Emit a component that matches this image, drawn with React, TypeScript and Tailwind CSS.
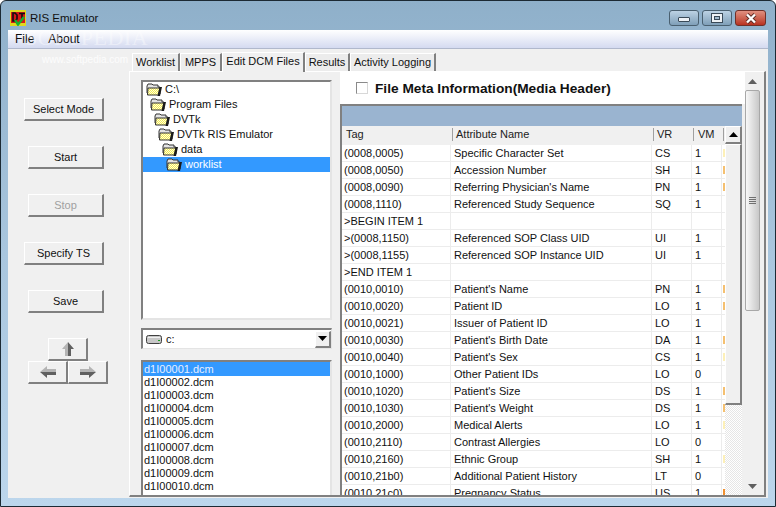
import { ReactNode } from 'react'

const rows: [string, string, string, string, string][] = [
  ['(0008,0005)', 'Specific Character Set', 'CS', '1', 'bg-[#fdf0b8]'],
  ['(0008,0050)', 'Accession Number', 'SH', '1', 'bg-[#f5c070]'],
  ['(0008,0090)', "Referring Physician's Name", 'PN', '1', 'bg-[#f5c070]'],
  ['(0008,1110)', 'Referenced Study Sequence', 'SQ', '1', 'bg-white'],
  ['>BEGIN ITEM 1', '', '', '', 'bg-white'],
  ['>(0008,1150)', 'Referenced SOP Class UID', 'UI', '1', 'bg-white'],
  ['>(0008,1155)', 'Referenced SOP Instance UID', 'UI', '1', 'bg-white'],
  ['>END ITEM 1', '', '', '', 'bg-white'],
  ['(0010,0010)', "Patient's Name", 'PN', '1', 'bg-[#f5c070]'],
  ['(0010,0020)', 'Patient ID', 'LO', '1', 'bg-[#f5c070]'],
  ['(0010,0021)', 'Issuer of Patient ID', 'LO', '1', 'bg-white'],
  ['(0010,0030)', "Patient's Birth Date", 'DA', '1', 'bg-[#f5c070]'],
  ['(0010,0040)', "Patient's Sex", 'CS', '1', 'bg-[#fdf0b8]'],
  ['(0010,1000)', 'Other Patient IDs', 'LO', '0', 'bg-white'],
  ['(0010,1020)', "Patient's Size", 'DS', '1', 'bg-[#f5c070]'],
  ['(0010,1030)', "Patient's Weight", 'DS', '1', 'bg-[#f5c070]'],
  ['(0010,2000)', 'Medical Alerts', 'LO', '1', 'bg-[#fdf0b8]'],
  ['(0010,2110)', 'Contrast Allergies', 'LO', '0', 'bg-white'],
  ['(0010,2160)', 'Ethnic Group', 'SH', '1', 'bg-[#fdf0b8]'],
  ['(0010,21b0)', 'Additional Patient History', 'LT', '0', 'bg-white'],
  ['(0010,21c0)', 'Pregnancy Status', 'US', '1', 'bg-[#f09030]'],
]

const tree = ['C:\\', 'Program Files', 'DVTk', 'DVTk RIS Emulator', 'data', 'worklist']
const indents = ['ml-[3px]', 'ml-[7px]', 'ml-[11px]', 'ml-[15px]', 'ml-[19px]', 'ml-[23px]']
const files = ['d1I00001.dcm', 'd1I00002.dcm', 'd1I00003.dcm', 'd1I00004.dcm', 'd1I00005.dcm', 'd1I00006.dcm', 'd1I00007.dcm', 'd1I00008.dcm', 'd1I00009.dcm', 'd1I00010.dcm', 'd1I00011.dcm']

const raised = 'border-t border-l border-t-white border-l-white border-r-2 border-b-2 border-r-[#808080] border-b-[#808080] bg-[#f0f0f0]'
const sunken = 'border-t-2 border-l-2 border-t-[#808080] border-l-[#808080] border-r-2 border-b-2 border-r-[#e4e4e4] border-b-[#e4e4e4] bg-white'

function Folder() {
  return (
    <svg width="16" height="13" viewBox="0 0 16 13" className="shrink-0">
      <defs>
        <pattern id="dither" width="2" height="2" patternUnits="userSpaceOnUse">
          <rect width="2" height="2" fill="#f6ee50" />
          <rect width="1" height="1" fill="#fffde0" />
          <rect x="1" y="1" width="1" height="1" fill="#fffde0" />
        </pattern>
      </defs>
      <path d="M1 3 L2 1 H6 L7 2 H12 V4 H14 V11 H2 L1 10 Z" fill="#e4e4e4" stroke="#333" strokeWidth="1" />
      <path d="M2 5 H14 L12.5 12 H1.5 Z" fill="url(#dither)" stroke="#333" strokeWidth="1" />
      <path d="M13.5 4 H16 L14 13 H11.5 Z" fill="#1a1a1a" />
    </svg>
  )
}

function AppIcon() {
  return (
    <svg width="16" height="16" viewBox="0 0 16 16" className="shrink-0">
      <rect width="16" height="16" fill="#e0d820" />
      <rect x="1" y="2" width="14" height="11" fill="#d81818" />
      <path d="M3 3 V11 H5 L7 9 V5 L5 3 Z M9 3.5 H15 M12 3.5 V10" fill="none" stroke="#101010" strokeWidth="1.6" />
      <path d="M5 10 L8 14.5 L14 7" fill="none" stroke="#16b030" strokeWidth="2.4" />
    </svg>
  )
}

function Btn({ w, disabled, children }: { w: string; disabled?: boolean; children: ReactNode }) {
  return (
    <div className={`${w} h-[23px] flex items-center justify-center ${raised} ${disabled ? 'text-[#a0a0a0]' : 'text-[#111]'}`}>
      {children}
    </div>
  )
}

function ArrowBtn({ light, dark }: { light: string; dark: string }) {
  return (
    <div className={`w-10 h-[23px] flex items-center justify-center ${raised}`}>
      <svg width="18" height="16" viewBox="0 0 18 16">
        <path d={light} fill="#b4b4b4" />
        <path d={dark} fill="#606060" />
      </svg>
    </div>
  )
}

function Tab({ label, w, active }: { label: string; w: string; active?: boolean }) {
  return (
    <div
      className={`${w} flex items-center justify-center border-t border-l border-t-white border-l-white border-r-2 border-r-[#808080] ${
        active ? 'h-5 pb-[2px] bg-[#f0f0f0] relative z-10 -mb-px' : 'h-[18px] bg-[#ececec]'
      }`}
    >
      {label}
    </div>
  )
}

function ScrollArrow({ up, dark }: { up?: boolean; dark?: boolean }) {
  return (
    <svg width="9" height="5" viewBox="0 0 9 5">
      <path d={up ? 'M4.5 0 L9 5 H0 Z' : 'M0 0 H9 L4.5 5 Z'} fill={dark ? '#000' : '#606060'} />
    </svg>
  )
}

const glassBtn = 'h-4 border border-[#4a6070] rounded-[3px] bg-gradient-to-b from-[#bcd2e4] to-[#7f9fb8] flex items-center justify-center'

export default function App() {
  return (
    <div className="w-[776px] h-[507px] overflow-hidden relative flex flex-col border border-[#1c2a34] rounded-t-md bg-gradient-to-b from-[#8fb0ca] via-[#a9c6de] to-[#bcd6ec] font-['Liberation_Sans',sans-serif] text-[11px] leading-none text-[#111]">
      <div className="h-[29px] shrink-0 flex items-start pl-[9px] pr-[9px] pt-[9px]">
        <AppIcon />
        <span className="ml-[4px] mt-[3px] text-[11.5px] text-[#101010]">RIS Emulator</span>
        <div className="ml-auto flex gap-[3px]">
          <div className={`w-[30px] ${glassBtn}`}>
            <div className="w-[12px] h-[5px] mt-[3px] bg-[#eef2f6] border border-[#3a4a58] rounded-[1px]" />
          </div>
          <div className={`w-[30px] ${glassBtn}`}>
            <div className="w-[12px] h-[10px] border border-[#3a4a58] bg-[#eef2f6] p-[2px]">
              <div className="w-full h-full border border-[#3a4a58] bg-[#9fb8cc]" />
            </div>
          </div>
          <div className="w-[31px] h-4 border border-[#703028] rounded-[3px] bg-gradient-to-b from-[#e09080] to-[#b83020] flex items-center justify-center">
            <svg width="14" height="11" viewBox="0 0 14 11">
              <path d="M3 1.5 L11 9.5 M11 1.5 L3 9.5" stroke="#5a2a24" strokeWidth="4" />
              <path d="M3 1.5 L11 9.5 M11 1.5 L3 9.5" stroke="#fff" strokeWidth="2.4" />
            </svg>
          </div>
        </div>
      </div>

      <div className="flex-1 min-h-0 mx-[7px] mb-[8px] flex flex-col">
        <div className="h-[19px] shrink-0 flex items-center gap-[14px] pl-[7px] bg-gradient-to-b from-[#ffffff] to-[#d4daf0] border-b border-b-[#b0b8cc] text-[12px] text-[#101010]">
          <span>File</span>
          <span>About</span>
        </div>

        <div className="flex-1 min-h-0 flex bg-[#f0f0f0]">
          <div className="w-[121px] shrink-0 flex flex-col">
            <div className="mt-[49px] flex flex-col gap-[25px] pl-[16px]">
              <Btn w="w-[80px]">Select Mode</Btn>
              <div className="pl-[4px]"><Btn w="w-[76px]">Start</Btn></div>
              <div className="pl-[4px]"><Btn w="w-[76px]" disabled>Stop</Btn></div>
              <Btn w="w-[80px]">Specify TS</Btn>
              <div className="pl-[4px]"><Btn w="w-[76px]">Save</Btn></div>
            </div>
            <div className="mt-[25px] pl-[20px] flex flex-col items-start">
              <div className="ml-[20px]">
                <ArrowBtn light="M9 1 L3 8 H6 V15 H9 Z" dark="M9 1 L15 8 H12 V15 H9 Z" />
              </div>
              <div className="flex">
                <ArrowBtn light="M1 8 L8 2 V5 H17 V8 Z" dark="M1 8 L8 14 V11 H17 V8 Z" />
                <ArrowBtn light="M17 8 L10 2 V5 H1 V8 Z" dark="M17 8 L10 14 V11 H1 V8 Z" />
              </div>
            </div>
          </div>

          <div className="flex-1 min-w-0 flex flex-col pr-[2px] pb-[1px]">
            <div className="h-[22px] shrink-0 flex items-end pl-[3px]">
              <Tab label="Worklist" w="w-[48px]" />
              <Tab label="MPPS" w="w-[42px]" />
              <Tab label="Edit DCM Files" w="w-[83px]" active />
              <Tab label="Results" w="w-[45px]" />
              <Tab label="Activity Logging" w="w-[86px]" />
            </div>

            <div className="flex-1 min-h-0 flex border-t border-l border-t-white border-l-white border-r-2 border-b-2 border-r-[#808080] border-b-[#808080]">
              <div className="w-[210px] shrink-0 flex flex-col pl-[11px] pr-[8px] pt-[8px]">
                <div className={`h-[240px] shrink-0 overflow-hidden ${sunken}`}>
                  {tree.map((t, i) => (
                    <div key={t} className={`h-[15px] flex items-center ${i === 5 ? 'bg-[#3399ff] text-white' : ''}`}>
                      <div className={`${indents[i]} flex items-center gap-[3px]`}>
                        <Folder />
                        <span>{t}</span>
                      </div>
                    </div>
                  ))}
                </div>

                <div className="mt-[8px] h-[21px] shrink-0 flex items-center border-t-2 border-l-2 border-t-[#808080] border-l-[#808080] border-b border-r border-b-[#e4e4e4] border-r-[#e4e4e4] bg-white">
                  <svg width="17" height="11" viewBox="0 0 17 11" className="ml-[3px] shrink-0">
                    <rect x="0.5" y="1.5" width="15" height="8" rx="2" fill="#c8c8c8" stroke="#404040" />
                    <rect x="2" y="3" width="12" height="1" fill="#f0f0f0" />
                    <rect x="12" y="6" width="2" height="1" fill="#20a020" />
                  </svg>
                  <span className="ml-[3px]">c:</span>
                  <div className={`ml-auto w-4 h-[17px] flex items-center justify-center ${raised}`}>
                    <ScrollArrow dark />
                  </div>
                </div>

                <div className="mt-[11px] flex-1 min-h-0 overflow-hidden border-t-2 border-l-2 border-r-2 border-t-[#808080] border-l-[#808080] border-r-[#e4e4e4] bg-white">
                  {files.map((f, i) => (
                    <div key={f} className={`h-[13px] first:h-[14px] pl-px flex items-center ${i === 0 ? 'bg-[#3399ff] text-[#e8f0ff]' : ''}`}>
                      {f}
                    </div>
                  ))}
                </div>
              </div>

              <div className="flex-1 min-w-0 flex">
                <div className="w-[402px] shrink-0 flex flex-col">
                  <div className="h-[32px] shrink-0 flex items-center pl-[16px] bg-white">
                    <div className="w-[12px] h-[12px] border border-[#8a8a8a] border-r-[#d8d8d8] border-b-[#d8d8d8] bg-white" />
                    <span className="ml-[7px] pt-[2px] font-bold text-[13.7px]">File Meta Information(Media Header)</span>
                  </div>
                  <div className="flex-1 min-h-0 flex flex-col border-t-2 border-l-2 border-t-[#808080] border-l-[#808080] overflow-hidden">
                    <div className="h-5 shrink-0 bg-[#9ab4d0]" />
                    <div className="flex-1 min-h-0 flex">
                      <div className="flex-1 min-w-0 flex flex-col bg-white overflow-hidden">
                        <div className="h-[19px] shrink-0 flex items-center pb-[2px] bg-[#f0f0f0] text-[#222]">
                          <div className="w-[110px] pl-[4px]">Tag</div>
                          <div className="w-[201px] h-[13px] flex items-center pl-[3px] border-l border-l-[#a0a0a0]">Attribute Name</div>
                          <div className="w-[40px] h-[13px] flex items-center pl-[3px] border-l border-l-[#a0a0a0]">VR</div>
                          <div className="w-[30px] h-[13px] flex items-center pl-[4px] border-l border-l-[#a0a0a0]">VM</div>
                          <div className="h-[13px] border-l border-l-[#a0a0a0]" />
                        </div>
                        {rows.map((r) => (
                          <div key={r[0]} className="h-[17px] shrink-0 flex items-center border-b border-b-[#ececec]">
                            <div className="w-[109px] shrink-0 pl-[2px] h-full flex items-center border-r border-r-[#ececec]">{r[0]}</div>
                            <div className="w-[201px] shrink-0 pl-[3px] h-full flex items-center border-r border-r-[#ececec]">{r[1]}</div>
                            <div className="w-[40px] shrink-0 pl-[3px] h-full flex items-center border-r border-r-[#ececec]">{r[2]}</div>
                            <div className="w-[30px] shrink-0 pl-[3px] h-full flex items-center border-r border-r-[#ececec]">{r[3]}</div>
                            <div className={`w-[2px] h-[8px] ml-[1px] shrink-0 ${r[4]}`} />
                          </div>
                        ))}
                      </div>
                      <div className="w-[17px] shrink-0 flex flex-col bg-[repeating-conic-gradient(#e6e6e6_0_25%,#ffffff_0_50%)] bg-size-[2px_2px]">
                        <div className={`h-[18px] shrink-0 flex items-center justify-center ${raised}`}>
                          <ScrollArrow up dark />
                        </div>
                        <div className={`h-[261px] shrink-0 ${raised}`} />
                      </div>
                    </div>
                  </div>
                </div>
                <div className="w-[22px] shrink-0 flex bg-[#f0f0f0]">
                  <div className="w-[3px] h-[32px] bg-white" />
                  <div className="w-[19px] flex flex-col">
                    <div className="h-[18px] shrink-0 pr-[4px] flex items-center justify-center">
                      <ScrollArrow up />
                    </div>
                    <div className="w-[15px] h-[221px] shrink-0 flex flex-col gap-px items-center justify-center bg-gradient-to-r from-[#f8f8f8] to-[#c8c8c8] border border-[#a8a8a8] rounded-[2px]">
                      <div className="w-[7px] h-px bg-[#707070]" />
                      <div className="w-[7px] h-px bg-[#707070]" />
                      <div className="w-[7px] h-px bg-[#707070]" />
                      <div className="w-[7px] h-px bg-[#707070]" />
                    </div>
                    <div className="flex-1" />
                    <div className="h-[16px] pr-[4px] mb-[1px] flex items-center justify-center">
                      <ScrollArrow />
                    </div>
                  </div>
                </div>
              </div>
            </div>
          </div>
        </div>
      </div>

      <div className="absolute left-[24px] top-[26px] text-[22px] tracking-[0.5px] font-['Liberation_Serif',serif] text-white/40 pointer-events-none">SOFTPEDIA</div>
      <div className="absolute left-[41px] top-[54px] text-[10px] text-white/80 pointer-events-none">www.softpedia.com</div>
    </div>
  )
}
